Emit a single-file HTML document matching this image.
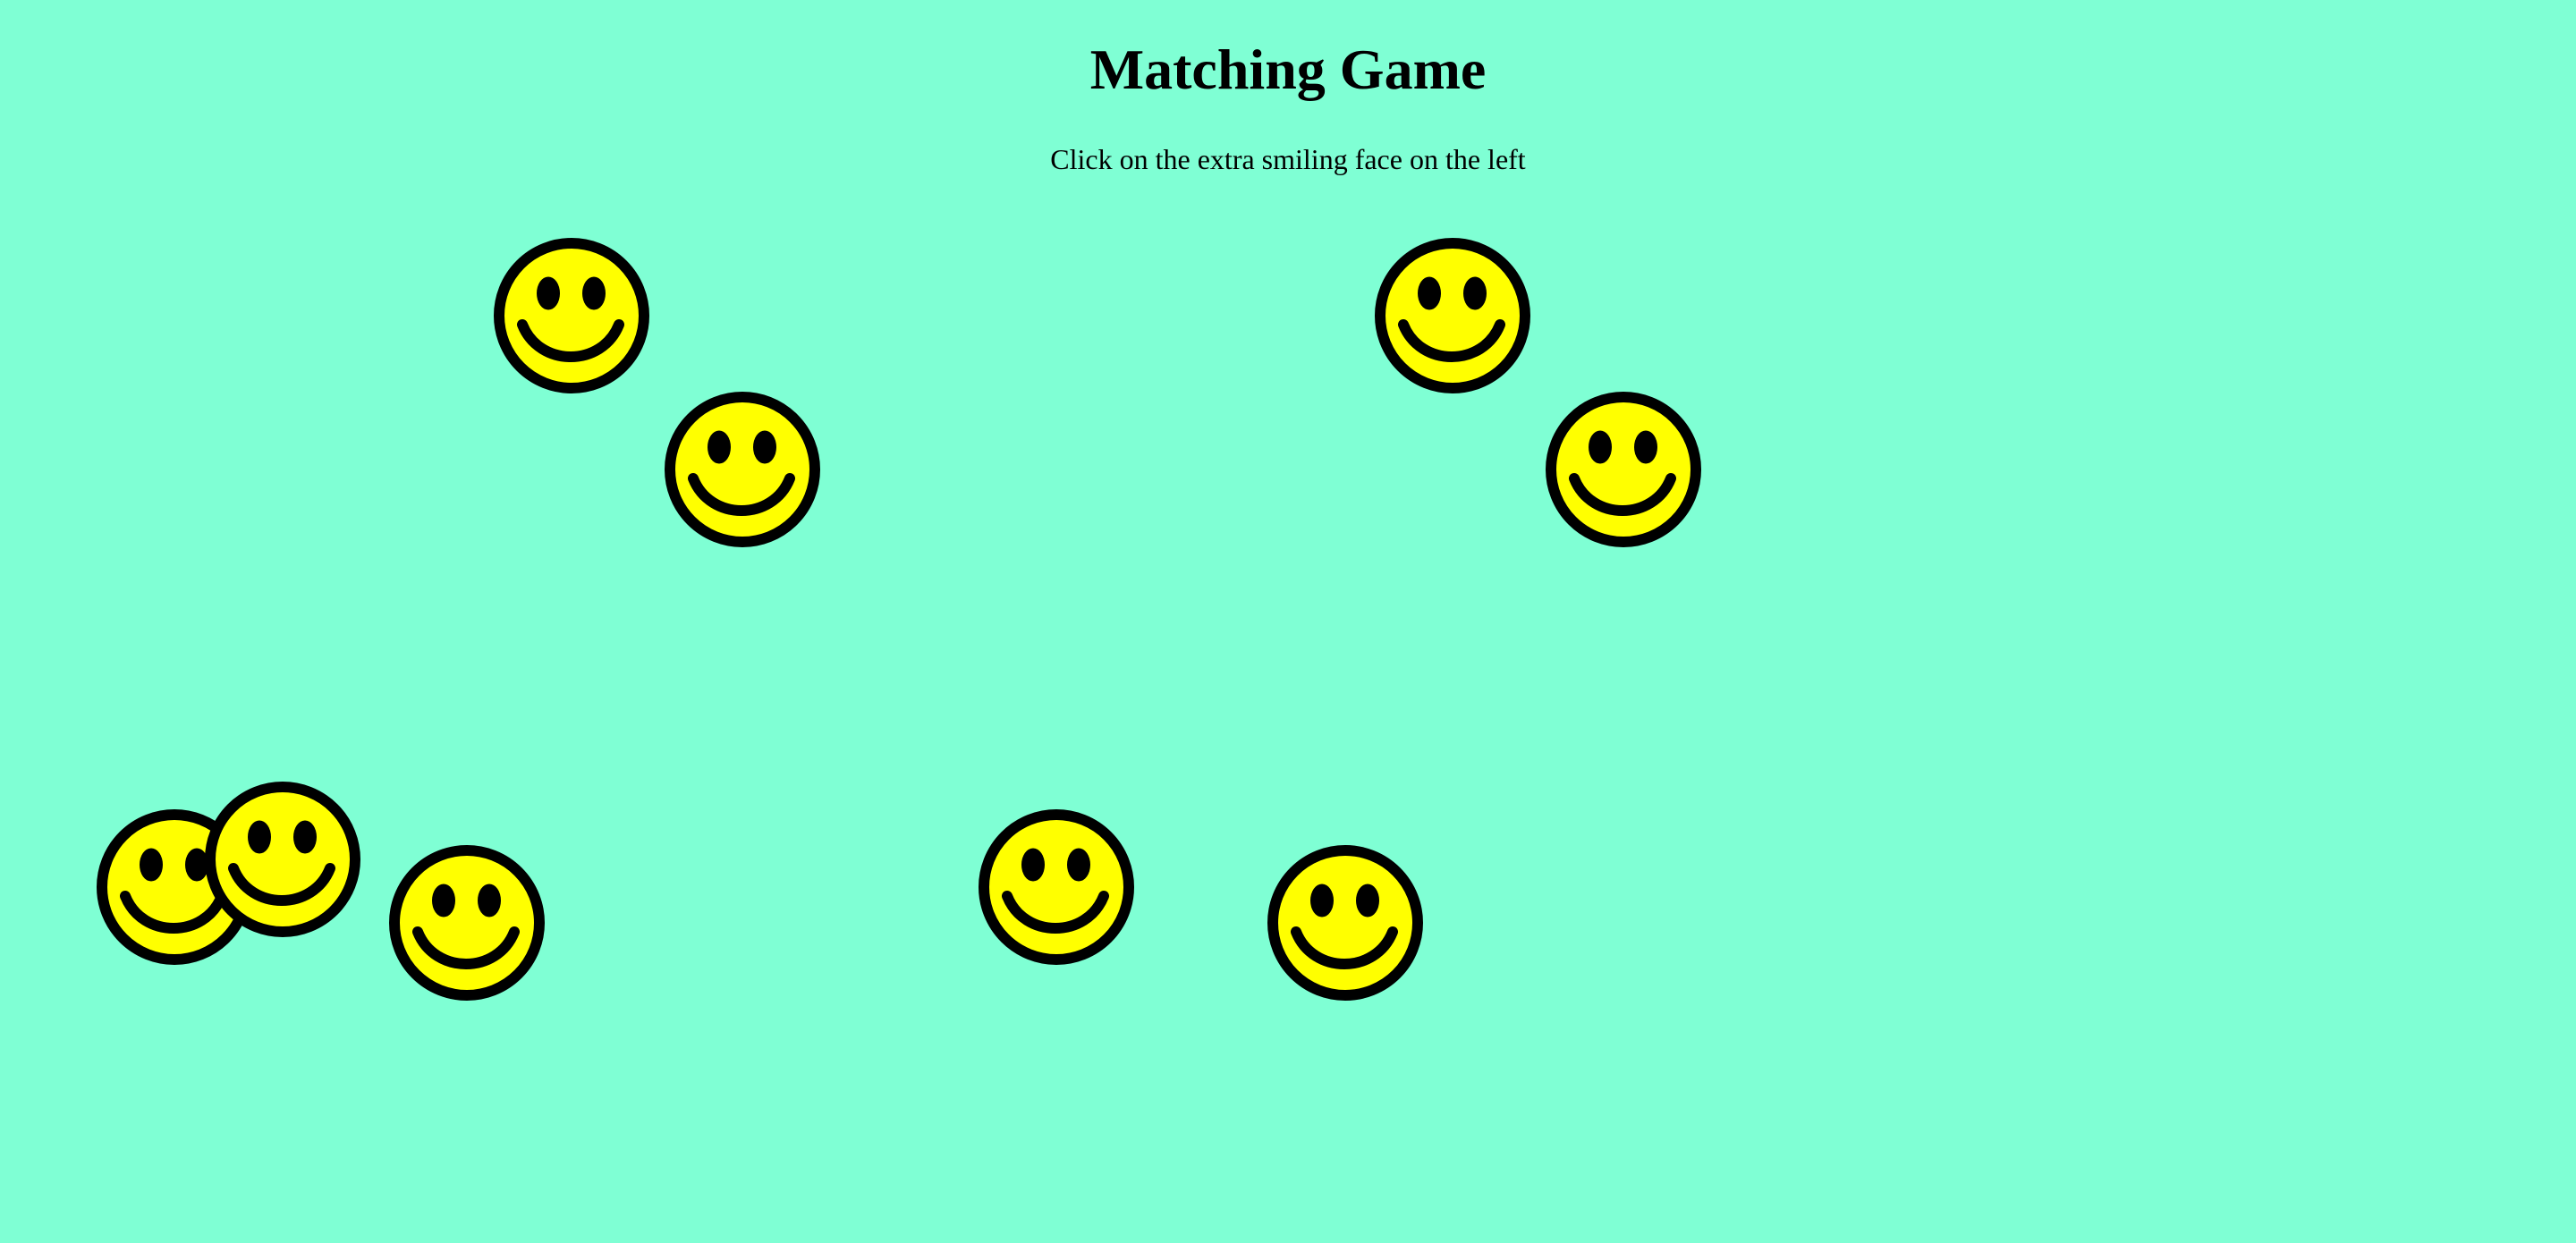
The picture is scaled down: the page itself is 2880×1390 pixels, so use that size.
<!DOCTYPE html>
<html><head><style>
html,body{margin:0;padding:0;}
body{width:2880px;height:1390px;background:#7fffd4;position:relative;overflow:hidden;font-family:"Liberation Serif",serif;color:#000;}
h1{position:absolute;left:0;width:2880px;top:0;margin:0;text-align:center;font-size:64px;font-weight:bold;line-height:1;padding-top:46px;}
p{position:absolute;left:0;width:2880px;top:0;margin:0;text-align:center;font-size:32px;line-height:1;padding-top:162px;}
svg{position:absolute;width:176px;height:176px;}
</style></head><body>
<h1>Matching Game</h1>
<p>Click on the extra smiling face on the left</p>
<svg style="left:551px;top:265px"><use href="#s"/></svg>
<svg style="left:742px;top:437px"><use href="#s"/></svg>
<svg style="left:1536px;top:265px"><use href="#s"/></svg>
<svg style="left:1727px;top:437px"><use href="#s"/></svg>
<svg style="left:107px;top:904px"><use href="#s"/></svg>
<svg style="left:228px;top:873px"><use href="#s"/></svg>
<svg style="left:434px;top:944px"><use href="#s"/></svg>
<svg style="left:1093px;top:904px"><use href="#s"/></svg>
<svg style="left:1416px;top:944px"><use href="#s"/></svg>
<svg style="width:0;height:0">
<defs><g id="s">
<circle cx="88" cy="88" r="81" fill="#ffff00" stroke="#000" stroke-width="12"/>
<ellipse cx="62" cy="63" rx="13" ry="18.5" fill="#000"/>
<ellipse cx="113" cy="63" rx="13" ry="18.5" fill="#000"/>
<path d="M33 98 C52 146,122 146,141 98" fill="none" stroke="#000" stroke-width="12" stroke-linecap="round"/>
</g></defs></svg>
</body></html>
